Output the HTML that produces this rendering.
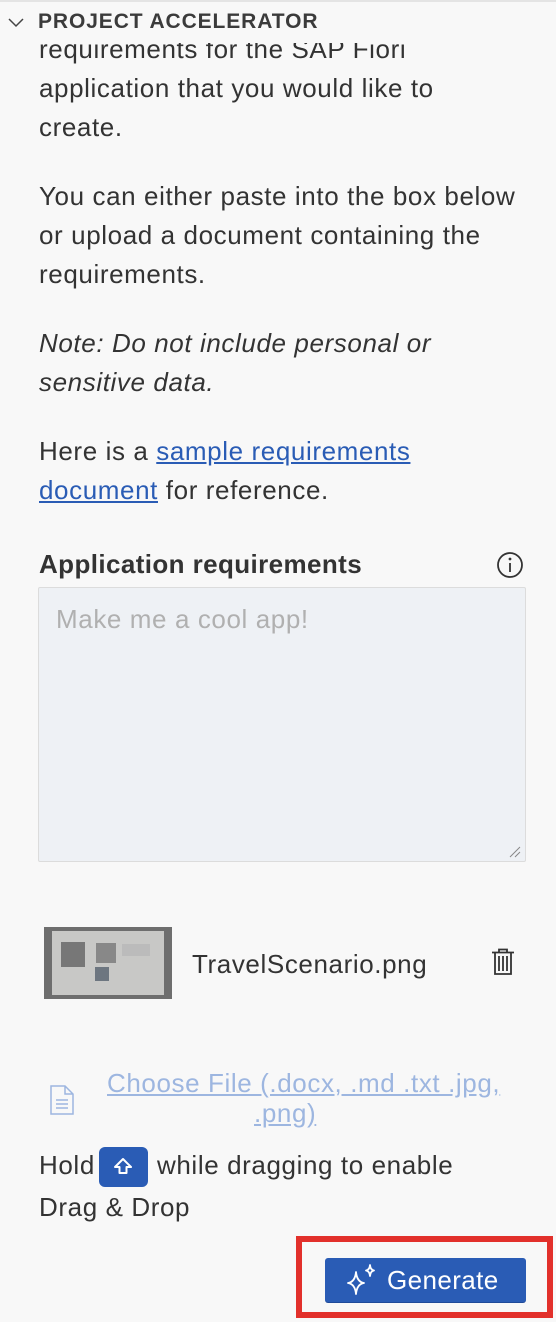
<!DOCTYPE html>
<html><head><meta charset="utf-8"><style>
html,body{margin:0;padding:0}
body{width:556px;height:1322px;background:#f8f8f8;position:relative;overflow:hidden;font-family:"Liberation Sans",Arial,sans-serif;color:#333;}
.t{position:absolute;left:39px;font-size:26px;letter-spacing:0.6px;line-height:39px;white-space:nowrap;}
a{color:#2a5cb5;text-decoration:underline}
</style></head><body>
<div style="position:absolute;left:0;top:0;width:556px;height:2px;background:#e4e4e4"></div>
<div class="t" style="top:30px;">requirements for the SAP Fiori</div>
<div style="position:absolute;left:0;top:2px;width:556px;height:41px;background:#f8f8f8"></div>
<svg style="position:absolute;left:7px;top:16px" width="18" height="12" viewBox="0 0 18 12"><path d="M2 3 L9 10 L16 3" fill="none" stroke="#444" stroke-width="1.5"/></svg>
<div style="position:absolute;left:38px;top:10px;font-size:21px;font-weight:bold;color:#3b3b3b;letter-spacing:0.9px">PROJECT ACCELERATOR</div>
<div class="t" style="top:69px">application that you would like to</div>
<div class="t" style="top:108px">create.</div>
<div class="t" style="top:177px">You can either paste into the box below</div>
<div class="t" style="top:216px">or upload a document containing the</div>
<div class="t" style="top:255px">requirements.</div>
<div class="t" style="top:324px;font-style:italic">Note: Do not include personal or</div>
<div class="t" style="top:363px;font-style:italic">sensitive data.</div>
<div class="t" style="top:432px">Here is a <a>sample requirements</a></div>
<div class="t" style="top:471px"><a>document</a> for reference.</div>
<div class="t" style="top:545px;font-weight:bold;letter-spacing:0.4px">Application requirements</div>
<svg style="position:absolute;left:495px;top:550px" width="30" height="30" viewBox="0 0 30 30"><circle cx="15" cy="15" r="12" fill="none" stroke="#333" stroke-width="1.8"/><circle cx="15" cy="9" r="1.4" fill="#333"/><path d="M15 13 V22" stroke="#333" stroke-width="1.8"/></svg>
<div style="position:absolute;left:38px;top:587px;width:486px;height:273px;background:#eef1f5;border:1px solid #dcdcdc;border-radius:2px"></div>
<div class="t" style="top:600px;left:56px;color:#b0b0b0">Make me a cool app!</div>
<svg style="position:absolute;left:508px;top:845px" width="14" height="14"><path d="M2 12 L12 2 M7 12 L12 7" stroke="#888" stroke-width="1"/></svg>
<svg style="position:absolute;left:44px;top:927px" width="128" height="72" viewBox="0 0 128 72"><rect width="128" height="72" fill="#6e6e6e"/><rect x="8" y="4" width="112" height="64" fill="#c8c8c6"/><rect x="17" y="15" width="24" height="25" fill="#777"/><rect x="52" y="16" width="20" height="20" fill="#888"/><rect x="51" y="40" width="14" height="14" fill="#6d7680"/><rect x="78" y="17" width="28" height="12" fill="#bbb"/></svg>
<div class="t" style="top:945px;left:192px">TravelScenario.png</div>
<svg style="position:absolute;left:490px;top:948px" width="26" height="28" viewBox="0 0 26 28"><path d="M9 4 V1.5 H17 V4 M2 4.5 H24 M5 5 V26 H21 V5 M9 8 V23 M13 8 V23 M17 8 V23" fill="none" stroke="#333" stroke-width="1.8"/></svg>
<svg style="position:absolute;left:49px;top:1085px" width="26" height="30" viewBox="0 0 26 30"><path d="M2 1 H16 L24 9 V29 H2 Z M16 1 V9 H24 M7 15 H19 M7 19 H19 M7 23 H19" fill="none" stroke="#9db6e0" stroke-width="1.5"/></svg>
<div class="t" style="top:1064px;left:107px;line-height:38px"><a style="color:#9db6e0">Choose File (.docx, .md .txt .jpg,</a></div>
<div class="t" style="top:1094px;left:254px;line-height:38px"><a style="color:#9db6e0">.png)</a></div>
<div class="t" style="top:1146px">Hold</div>
<div style="position:absolute;left:99px;top:1147px;width:49px;height:40px;background:#2a5cb5;border-radius:6px"></div>
<svg style="position:absolute;left:111px;top:1155px" width="24" height="24" viewBox="0 0 24 24"><path d="M12 4 L20 12 H15.5 V18 H8.5 V12 H4 Z" fill="none" stroke="#fff" stroke-width="2" stroke-linejoin="round"/></svg>
<div class="t" style="top:1146px;left:157px">while dragging to enable</div>
<div class="t" style="top:1188px">Drag &amp; Drop</div>
<div style="position:absolute;left:296px;top:1236px;width:245px;height:70px;border:6px solid #e2302b"></div>
<div style="position:absolute;left:325px;top:1258px;width:201px;height:44px;background:#2a5cb5;border-radius:3px;border-bottom:1px solid #1f4a99"></div>
<svg style="position:absolute;left:344px;top:1262px" width="36" height="36" viewBox="0 0 36 36"><path d="M12 10 Q13 20 20 21 Q13 22 12 32 Q11 22 4 21 Q11 20 12 10 Z M26 3 Q26.5 8 30 8.5 Q26.5 9 26 14 Q25.5 9 22 8.5 Q25.5 8 26 3 Z" fill="none" stroke="#fff" stroke-width="1.8" stroke-linejoin="round"/></svg>
<div style="position:absolute;left:387px;top:1262px;font-size:26px;letter-spacing:0.4px;line-height:36px;color:#fff">Generate</div>
</body></html>
